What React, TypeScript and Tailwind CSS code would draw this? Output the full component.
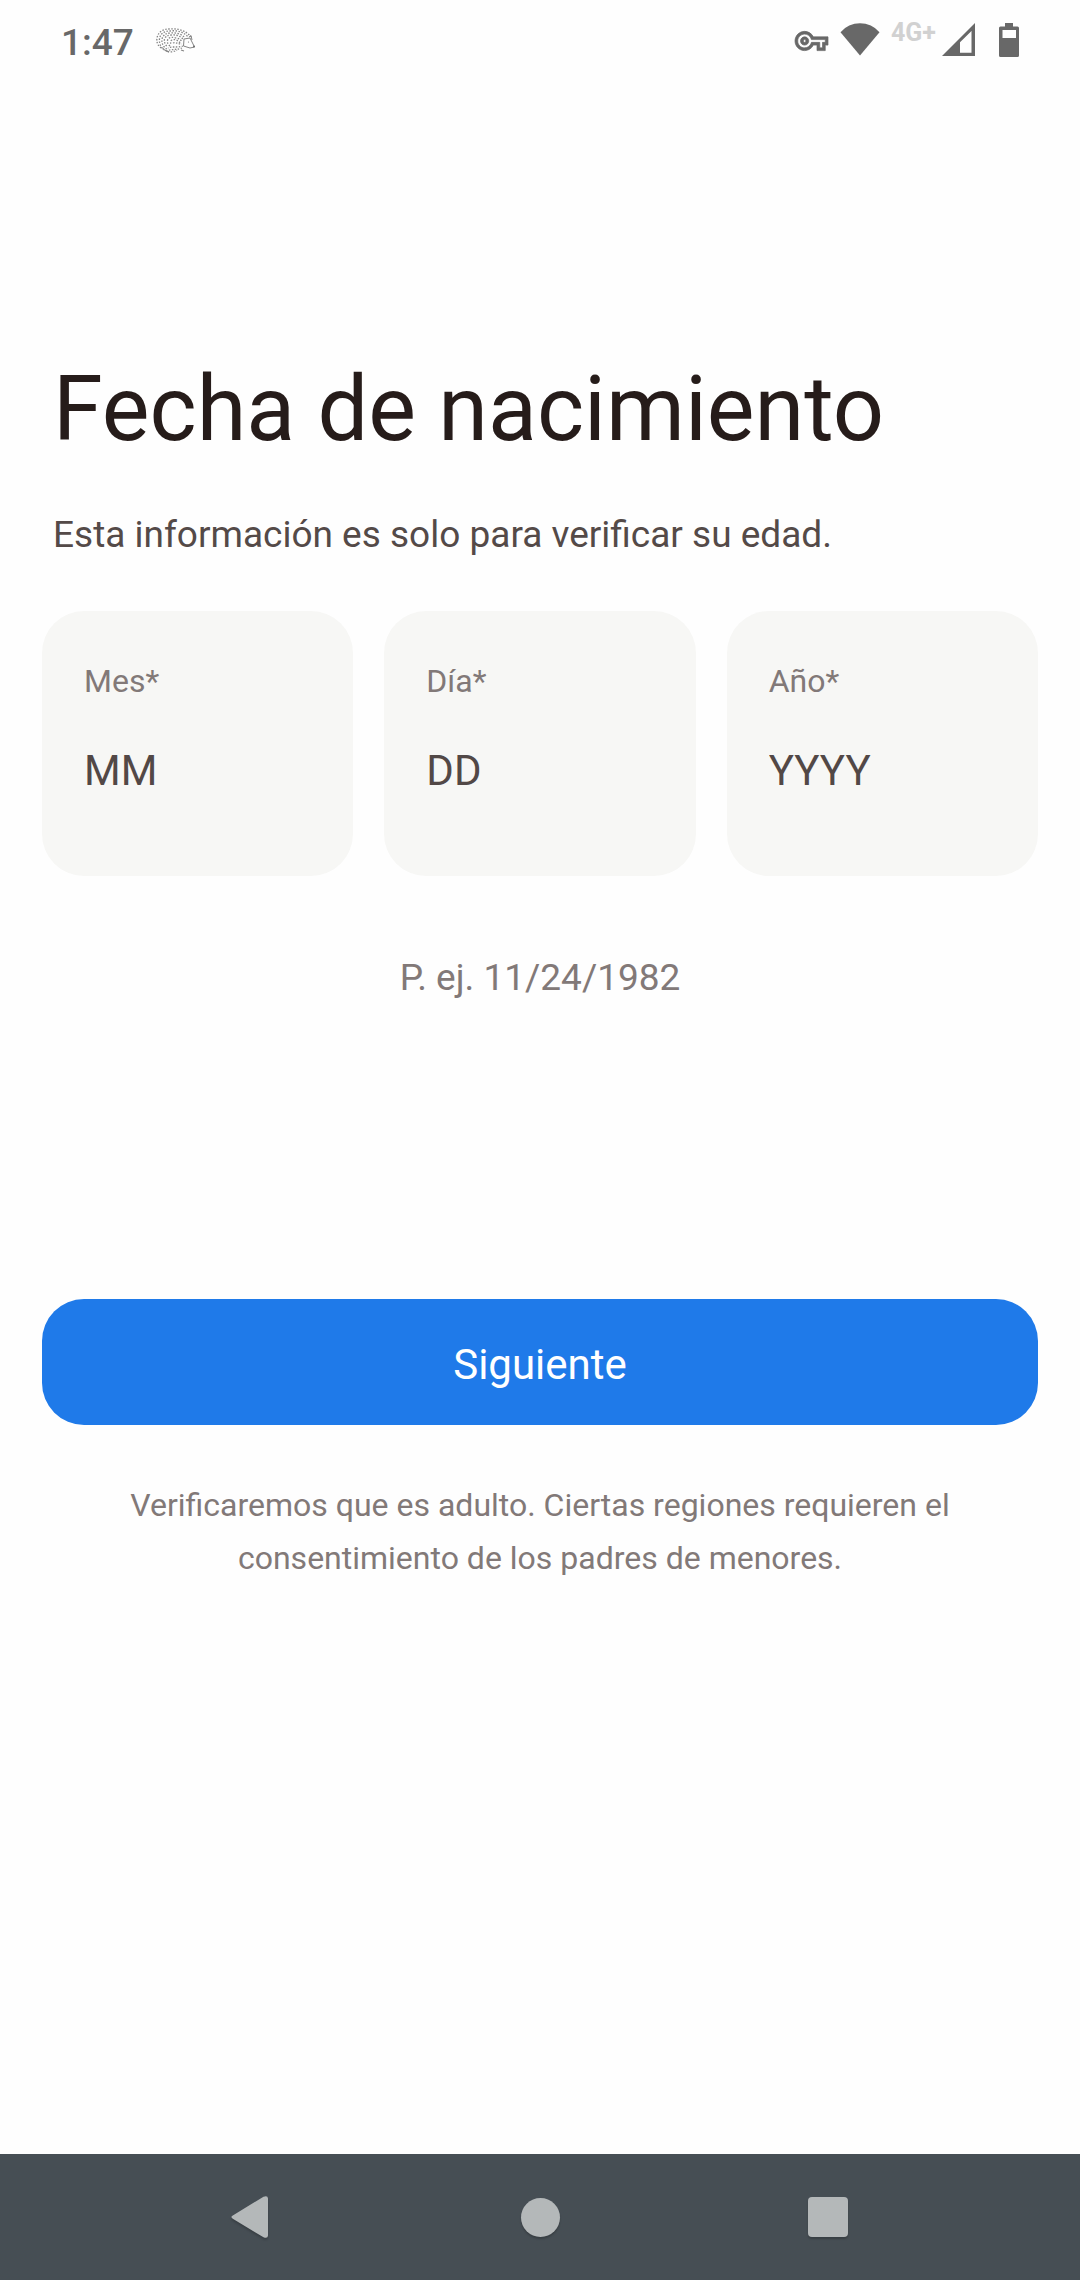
import React from "react";

const fields = [
  { id: "month", label: "Mes*", placeholder: "MM", maxLength: 2 },
  { id: "day", label: "Día*", placeholder: "DD", maxLength: 2 },
  { id: "year", label: "Año*", placeholder: "YYYY", maxLength: 4 },
];

function HedgehogIcon() {
  return (
    <svg viewBox="0 0 40 44" className="h-11 w-10" fill="none" stroke="#858585" aria-hidden="true">
      <g strokeWidth="1.300" strokeDasharray="1.500 1.500">
        <path d="M8 29C3 28 0 23 1 18C2 12 7 9 13 9C22 8 31 11 35 17" />
        <path d="M10 31C5 28 3 24 3.500 19C4 14 8 11 14 11C21 10 28 12 32 17" strokeDashoffset="1.500" />
        <path d="M11 29C7 27 5.500 23 6 19C7 15 10 13 15 13C20 12.500 26 14 29 18" />
        <path d="M12 27C9 25 8 22 8.500 19C10 16 12 15 16 15C20 14.500 24 16 27 19" strokeDashoffset="1.500" />
        <path d="M14 26C11 24 11 21 12 19C14 17 17 17 20 18C23 18 25 20 26 22" />
        <path d="M16 25C14 23 14 21 16 20C19 19 22 20 25 24" strokeDashoffset="1.500" />
        <path d="M10 31C15 29 20 30 26 28" />
        <path d="M12 28C16 26 20 28 27 26" strokeDashoffset="1" />
        <path d="M17 23C20 22 22 24 26 24" />
        <path d="M9 30C13 33 18 32 21 30" />
      </g>
      <path d="M28 19L34 18L38.500 27L34 28L27.500 26Z" strokeWidth="1" />
      <path d="M33 17L35 15.500L36 20" strokeWidth="1" />
      <path d="M10 31l3 1M25 30l3 1" strokeWidth="1.200" />
      <circle cx="32.500" cy="22" r="0.600" fill="#777" stroke="none" />
      <circle cx="38" cy="26.500" r="0.900" fill="#666" stroke="none" />
    </svg>
  );
}

function KeyIcon() {
  return (
    <svg
      viewBox="0 -3.270 24 32"
      className="h-11 w-[33px] overflow-visible"
      fill="currentColor"
      stroke="currentColor"
      strokeWidth="0.500"
      aria-hidden="true"
    >
      <path d="M22 19h-6v-4h-2.680c-1.140 2.420-3.600 4-6.320 4-3.860 0-7-3.140-7-7s3.140-7 7-7c2.720 0 5.170 1.580 6.320 4H24v6h-2v4zm-4-2h2v-4h2v-2H11.940l-.230-.670C11.010 8.340 9.110 7 7 7c-2.760 0-5 2.240-5 5s2.240 5 5 5c2.110 0 4.010-1.340 4.710-3.330l.230-.670H18v4zM7 15c-1.650 0-3-1.350-3-3s1.350-3 3-3 3 1.350 3 3-1.350 3-3 3zm0-4c-.550 0-1 .450-1 1s.450 1 1 1 1-.450 1-1-.450-1-1-1z" />
    </svg>
  );
}

function WifiIcon() {
  return (
    <svg viewBox="0 0 40 44" className="h-11 w-10" fill="currentColor" aria-hidden="true">
      <path d="M0.500 12.300A25.500 25.500 0 0 1 39.500 12.300L20 35.500Z" />
    </svg>
  );
}

function SignalIcon() {
  return (
    <svg viewBox="0 0 33 44" className="h-11 w-[33px]" fill="currentColor" aria-hidden="true">
      <path fillRule="evenodd" d="M0 36L33 3V36ZM18 22.200V32.700H29.500V11Z" />
    </svg>
  );
}

function BatteryIcon() {
  return (
    <svg viewBox="0 0 20 44" className="h-11 w-5" fill="currentColor" aria-hidden="true">
      <path
        fillRule="evenodd"
        d="M6 3H14V6.500H18.500A1.500 1.500 0 0 1 20 8V35.500A1.500 1.500 0 0 1 18.500 37H1.500A1.500 1.500 0 0 1 0 35.500V8A1.500 1.500 0 0 1 1.500 6.500H6ZM3.500 10V18H17V10Z"
      />
    </svg>
  );
}

function StatusBar() {
  return (
    <header className="flex h-[84px] items-start justify-between pt-5 pr-[61px] pl-[61px] text-[#686868]">
      <div className="flex gap-[22px]">
        <span className="text-[37px] leading-[46px] font-medium">1:47</span>
        <HedgehogIcon />
      </div>
      <div className="flex items-start">
        <KeyIcon />
        <span className="ml-3">
          <WifiIcon />
        </span>
        <span className="ml-[11px] text-[25px] leading-[26px] font-bold text-[#d1d1d1]">4G+</span>
        <span className="ml-1.5">
          <SignalIcon />
        </span>
        <span className="ml-6">
          <BatteryIcon />
        </span>
      </div>
    </header>
  );
}

function NavigationBar() {
  return (
    <nav className="mt-auto flex h-[126px] items-center justify-center gap-48 bg-[#464e54] text-[#b4b8b9]">
      <button type="button" aria-label="Atrás" className="flex size-24 items-center justify-center">
        <svg
          viewBox="0 0 48 48"
          className="size-12 drop-shadow-[0_2px_1px_rgba(0,0,0,0.2)]"
          fill="currentColor"
          aria-hidden="true"
        >
          <path d="M4.800 22.600L35.500 3.700Q39.800 2 40 5.500V42.500Q39.800 46 35.500 44.300L4.800 25.800Q2 24 4.800 22.600Z" />
        </svg>
      </button>
      <button type="button" aria-label="Inicio" className="flex size-24 items-center justify-center">
        <span className="size-[39px] rounded-full bg-current shadow-[0_2px_2px_rgba(0,0,0,0.2)]" />
      </button>
      <button type="button" aria-label="Recientes" className="flex size-24 items-center justify-center">
        <span className="size-10 rounded-[4px] bg-current shadow-[0_2px_2px_rgba(0,0,0,0.2)]" />
      </button>
    </nav>
  );
}

export default function App() {
  return (
    <div className="flex min-h-screen flex-col bg-[#fefefe] font-[Roboto,sans-serif]">
      <StatusBar />
      <main className="px-[42px] pt-[273px] pb-16">
        <h1 className="px-[11px] text-[90px] leading-[106px] text-[#261c1a]">Fecha de nacimiento</h1>
        <p className="mt-[50px] px-[11px] text-[37px] leading-[44px] text-[#544a48]">
          Esta información es solo para verificar su edad.
        </p>
        <form onSubmit={(event) => event.preventDefault()}>
          <div className="mt-[54px] grid grid-cols-3 gap-[31px]">
            {fields.map((field) => (
              <div key={field.id} className="rounded-[42px] bg-[#f7f7f5] px-[42px] pt-[50px] pb-20">
                <label htmlFor={field.id} className="block text-[32px] leading-[40px] text-[#827978]">
                  {field.label}
                </label>
                <input
                  id={field.id}
                  type="text"
                  inputMode="numeric"
                  maxLength={field.maxLength}
                  placeholder={field.placeholder}
                  className="mt-[45px] block h-[50px] w-full bg-transparent text-[42px] leading-[50px] text-[#524846] outline-none placeholder:text-[#524846]"
                />
              </div>
            ))}
          </div>
          <p className="mt-20 text-center text-[37px] leading-[44px] text-[#827978]">P. ej. 11/24/1982</p>
          <button
            type="submit"
            className="mt-[299px] block h-[126px] w-full rounded-[42px] bg-[#1f7ae9] pt-1.5 text-[42px] leading-[50px] text-white"
          >
            Siguiente
          </button>
        </form>
        <p className="mt-[54px] px-10 text-center text-[32px] leading-[53px] text-[#827978]">
          Verificaremos que es adulto. Ciertas regiones requieren el consentimiento de los padres de menores.
        </p>
      </main>
      <NavigationBar />
    </div>
  );
}
